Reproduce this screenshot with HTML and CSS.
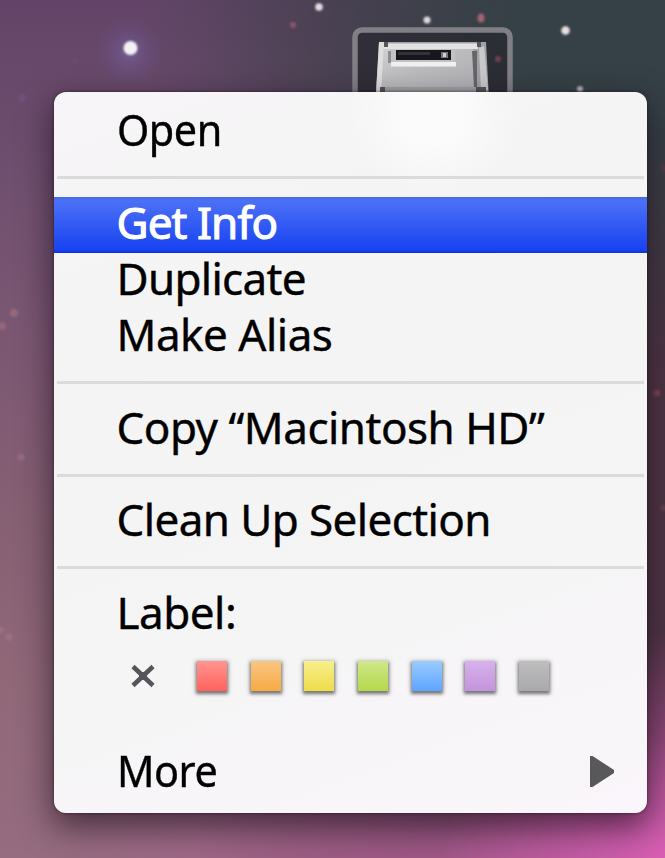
FILE: index.html
```html
<!DOCTYPE html>
<html lang="en">
<head>
    <meta charset="UTF-8">
    <meta name="viewport" content="width=device-width, initial-scale=1.0">
    <title>Context menu</title>
    <link rel="stylesheet" href="styles.css">
</head>
<body>
<div class="desktop">
    <svg class="sky" width="665" height="858" viewBox="0 0 665 858">
        <defs>
            <radialGradient id="halo">
                <stop offset="0" stop-color="#7a68a8" stop-opacity=".6"/>
                <stop offset="1" stop-color="#6a5090" stop-opacity="0"/>
            </radialGradient>
            <linearGradient id="metal" x1="0" y1="0" x2="1" y2="1">
                <stop offset="0" stop-color="#d2d2d3"/>
                <stop offset=".5" stop-color="#bcbcbf"/>
                <stop offset="1" stop-color="#b0b0b4"/>
            </linearGradient>
            <filter id="soft"><feGaussianBlur stdDeviation=".9"/></filter>
            <filter id="edge"><feGaussianBlur stdDeviation=".5"/></filter>
        </defs>
        <!-- stars -->
        <circle cx="129" cy="52" r="34" fill="url(#halo)"/>
        <g filter="url(#soft)">
            <circle cx="130.500" cy="48" r="7" fill="#f3f1f5"/>
            <circle cx="319" cy="7" r="3.800" fill="#e2dfe3"/>
            <circle cx="427" cy="20" r="3.500" fill="#ddd"/>
            <circle cx="565.500" cy="30.500" r="4.300" fill="#e8dfe1"/>
            <circle cx="580" cy="89" r="3" fill="#b9b5bc"/>
            <circle cx="293" cy="25" r="3" fill="#8a566d"/>
            <ellipse cx="481" cy="18" rx="3.500" ry="4.500" fill="#a2636f"/>
            <circle cx="75" cy="61" r="3" fill="#6c4a76"/>
            <circle cx="22" cy="98" r="4" fill="#6f507f"/>
            <circle cx="14" cy="313" r="4" fill="#966a7b"/>
            <circle cx="2" cy="326" r="4" fill="#96657d"/>
            <circle cx="21" cy="457" r="3.500" fill="#966b80"/>
            <circle cx="9" cy="637" r="3.500" fill="#9c6f80"/>
            <circle cx="1" cy="630" r="3" fill="#9c6f80"/>
            <circle cx="657" cy="393" r="3.500" fill="#7b4650"/>
            <circle cx="664" cy="168" r="3" fill="#5a3b48"/>
            <circle cx="663" cy="508" r="3" fill="#6c4052"/>
        </g>
        <!-- selected hard drive -->
        <rect x="355" y="30" width="155" height="120" rx="7" fill="#23222a" fill-opacity=".6" stroke="#807f86" stroke-width="5.500"/>
        <circle cx="498" cy="59" r="3" fill="#70414f" filter="url(#soft)"/>
        <g filter="url(#edge)">
            <path d="M379 42H486L489 100H375.500Z" fill="#a2a2a4"/>
            <path d="M381 44H473L474 87H379Z" fill="url(#metal)"/>
            <path d="M382 43.500H478V49H382Z" fill="#e2e2e3"/>
            <path d="M379 42H384L381 94H376Z" fill="#dededf"/>
            <path d="M479 48L484 46L488 90H481Z" fill="#c9c9cc"/>
            <path d="M472 51H477V87H474Z" fill="#66666b"/>
            <path d="M384 42H388V47H384ZM477 42H481V47H477ZM380 87H385V93H380ZM476 87H486V93H476Z" fill="#55555a"/>
            <path d="M388 51H391V63H388Z" fill="#8d8d90"/>
            <path d="M391 50H455V64H391Z" fill="#c2c2c4"/>
            <path d="M391 62H456V66.500H391Z" fill="#f1f1f2"/>
            <path d="M396 50H451V60H396Z" fill="#17171d"/>
            <path d="M398 52H430V55H398Z" fill="#303038"/>
            <path d="M441 52H448V58H441Z" fill="#77777d"/>
            <path d="M443 53H446V57H443Z" fill="#d0d0d4"/>
        </g>
    </svg>

    <div class="menu">
        <div class="item"><span class="narrow">Open</span></div>
        <div class="line"></div>
        <div class="item active">Get Info</div>
        <div class="item duplicate">Duplicate</div>
        <div class="item">Make Alias</div>
        <div class="line"></div>
        <div class="item">Copy “Macintosh HD”</div>
        <div class="line"></div>
        <div class="item clean">Clean Up Selection</div>
        <div class="line"></div>
        <div class="item">Label:</div>
        <div class="colors">
            <svg class="none" width="26" height="26" viewBox="0 0 26 26"><path d="M3 3.500L23 22.500M23 3.500L3 22.500" stroke="#55545a" stroke-width="4.500"/><path d="M9 9H17V17H9Z" fill="#55545a"/></svg>
            <span class="red"></span>
            <span class="orange"></span>
            <span class="yellow"></span>
            <span class="green"></span>
            <span class="blue"></span>
            <span class="purple"></span>
            <span class="gray"></span>
        </div>
        <div class="item more">
            <span class="narrow">More</span>
            <svg width="25" height="32" viewBox="0 0 25 32"><path d="M0 0H2.500L24 14V17L2.500 31H0Z" fill="#58575a"/></svg>
        </div>
    </div>
</div>
</body>
</html>
```

FILE: styles.css
```css
body{
    margin: 0;
    overflow: hidden;
}
.desktop{
    position: relative;
    box-sizing: border-box;
    width: 665px;
    height: 858px;
    padding: 92px 18px 45px 53.500px;
    overflow: hidden;
    background:
        radial-gradient(circle 240px at 680px 870px, #df60ba, rgba(210,90,170,0) 100%),
        radial-gradient(ellipse 480px 160px at 520px 890px, #b05a94, rgba(150,80,125,0) 100%),
        radial-gradient(ellipse 500px 330px at 640px 40px, #354146 25%, rgba(55,62,68,0) 100%),
        linear-gradient(90deg, rgba(70,45,60,0) 30%, #4e3544 100%),
        linear-gradient(#634468, #70506f 22%, #7d5873 42%, #866073 60%, #906878 80%, #956c80);
}
.sky{
    position: absolute;
    left: 0;
    top: 0;
}
.menu{
    position: relative;
    box-sizing: border-box;
    height: 721px;
    padding-top: 12.300px;
    border-radius: 12px;
    background:
        radial-gradient(ellipse 85px 75px at 378px 25px, #fbfbfb 35%, rgba(251,251,251,0) 100%),
        linear-gradient(160deg, #f7f5f7, #f4f4f4 40%, #f6f5f6 70%, #faf6fb);
    box-shadow: 0 0 3px rgba(30,15,30,.7), 0 12px 32px 2px rgba(25,10,25,.62);
}
.item{
    box-sizing: border-box;
    height: 56.400px;
    padding-left: 63px;
    color: #000;
    font: 44px/51px "Noto Sans", "Open Sans", sans-serif;
    letter-spacing: -.5px;
    white-space: nowrap;
    -webkit-text-stroke: .4px;
}
.narrow{
    display: inline-block;
    letter-spacing: -.5px;
    transform: scaleX(.94);
    transform-origin: 0 0;
}
.active{
    color: #fff;
    letter-spacing: -.900px;
    -webkit-text-stroke: 1px;
    background: linear-gradient(#426be5, #4c70f6 7%, #1843f0 94%, #0c32dd);
}
.duplicate{
    letter-spacing: -.700px;
}
.clean{
    letter-spacing: -.600px;
}
.line{
    height: 3px;
    margin: 15.500px 3px 17.500px;
    background: #dcdbdc;
}
.colors{
    display: flex;
    align-items: center;
    height: 66px;
    padding-left: 76px;
}
.none{
    margin: 0 41.500px 0 0;
}
.colors span{
    width: 30px;
    height: 30px;
    margin-right: 23.650px;
    box-shadow: 0 2px 3px 1px rgba(0,0,0,.45), 0 1px 5px 2px rgba(0,0,0,.12);
}
.red{
    background: linear-gradient(#ff9590, #ff625d);
}
.orange{
    background: linear-gradient(#f9c682, #f7aa44);
}
.yellow{
    background: linear-gradient(#f8ef8c, #eedc4a);
}
.green{
    background: linear-gradient(#cfe88a, #b4d84a);
}
.blue{
    background: linear-gradient(#98ccff, #5ea4ff);
}
.purple{
    background: linear-gradient(#d8b2ec, #c393dc);
}
.gray{
    background: linear-gradient(#bebebf, #a9a9ab);
}
.more{
    display: flex;
    justify-content: space-between;
    margin-top: 35.500px;
    padding-right: 32px;
}
.more svg{
    margin-top: 11.500px;
}
```
